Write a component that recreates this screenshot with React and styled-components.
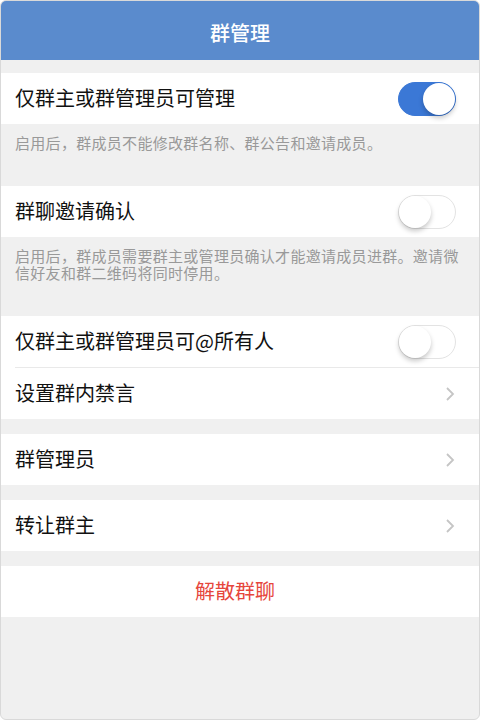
import React, { useState } from 'react'
import styled, { createGlobalStyle } from 'styled-components'

const GlobalStyle = createGlobalStyle`
  html, body {
    margin: 0;
    padding: 0;
    background: #ffffff;
  }
  * {
    box-sizing: border-box;
  }
`

const Screen = styled.div`
  width: 480px;
  height: 720px;
  display: flex;
  flex-direction: column;
  background: #f0f0f0;
  border: 1px solid #d9d9d9;
  border-radius: 6px;
  overflow: hidden;
  font-family: 'Noto Sans CJK SC', 'Noto Sans', sans-serif;
  color: #111;
`

const Header = styled.header`
  height: 59px;
  flex-shrink: 0;
  display: flex;
  align-items: center;
  justify-content: center;
  background: #5a8bcd;
  color: #fff;
  font-size: 20px;
  font-weight: 500;
  padding-top: 4px;
`

const Content = styled.div`
  display: flex;
  flex-direction: column;
  padding-top: 13px;
`

const Group = styled.section`
  background: #fff;
  display: flex;
  flex-direction: column;
  margin-bottom: ${(p) => (p.$gap ? p.$gap : 0)}px;
`

const Row = styled.div`
  height: 51px;
  display: flex;
  align-items: center;
  justify-content: ${(p) => (p.$center ? 'center' : 'space-between')};
  padding: 0 24px 3px 14px;
  position: relative;
  font-size: 20px;
  color: ${(p) => (p.$danger ? '#e6463c' : '#111')};

  & + & {
    border-top: 1px solid #e9e9e9;
    height: 52px;
  }
  & + &::before {
    content: '';
    position: absolute;
    top: -1px;
    left: 0;
    width: 14px;
    height: 1px;
    background: #fff;
  }
`

const Note = styled.p`
  margin: 0;
  padding: 10px 10px 35px 14px;
  font-size: 15px;
  letter-spacing: 0.3px;
  line-height: 17px;
  color: #999;
`

const Track = styled.button`
  width: 58px;
  height: 34px;
  margin-right: -1px;
  margin-top: 3px;
  border-radius: 17px;
  border: 1px solid ${(p) => (p.$on ? '#3b78d6' : '#e3e3e3')};
  background: ${(p) => (p.$on ? '#3b78d6' : '#fff')};
  padding: 0;
  position: relative;
  cursor: pointer;
  outline: none;
`

const Knob = styled.span`
  position: absolute;
  top: 0;
  left: ${(p) => (p.$on ? '24px' : '0')};
  width: 32px;
  height: 32px;
  border-radius: 50%;
  background: #fff;
  box-shadow: 0 3px 5px rgba(0, 0, 0, 0.22);
`

const ChevronBox = styled.svg`
  margin-top: 3px;
`

const Chevron = () => (
  <ChevronBox width="10" height="16" viewBox="0 0 10 16">
    <path d="M2 2 L8 8 L2 14" fill="none" stroke="#c5c5c5" strokeWidth="1.8" />
  </ChevronBox>
)

const Switch = ({ on, onClick }) => (
  <Track $on={on} onClick={onClick}>
    <Knob $on={on} />
  </Track>
)

export default function App() {
  const [flags, setFlags] = useState({ admin: true, confirm: false, atAll: false })
  const toggle = (k) => setFlags((f) => ({ ...f, [k]: !f[k] }))

  return (
    <>
      <GlobalStyle />
      <Screen>
        <Header>群管理</Header>
        <Content>
          <Group>
            <Row>
              仅群主或群管理员可管理
              <Switch on={flags.admin} onClick={() => toggle('admin')} />
            </Row>
          </Group>
          <Note>启用后，群成员不能修改群名称、群公告和邀请成员。</Note>
          <Group>
            <Row>
              群聊邀请确认
              <Switch on={flags.confirm} onClick={() => toggle('confirm')} />
            </Row>
          </Group>
          <Note>
            启用后，群成员需要群主或管理员确认才能邀请成员进群。邀请微信好友和群二维码将同时停用。
          </Note>
          <Group $gap={15}>
            <Row>
              仅群主或群管理员可@所有人
              <Switch on={flags.atAll} onClick={() => toggle('atAll')} />
            </Row>
            <Row>
              设置群内禁言
              <Chevron />
            </Row>
          </Group>
          <Group $gap={15}>
            <Row>
              群管理员
              <Chevron />
            </Row>
          </Group>
          <Group $gap={15}>
            <Row>
              转让群主
              <Chevron />
            </Row>
          </Group>
          <Group>
            <Row $center $danger>
              解散群聊
            </Row>
          </Group>
        </Content>
      </Screen>
    </>
  )
}
